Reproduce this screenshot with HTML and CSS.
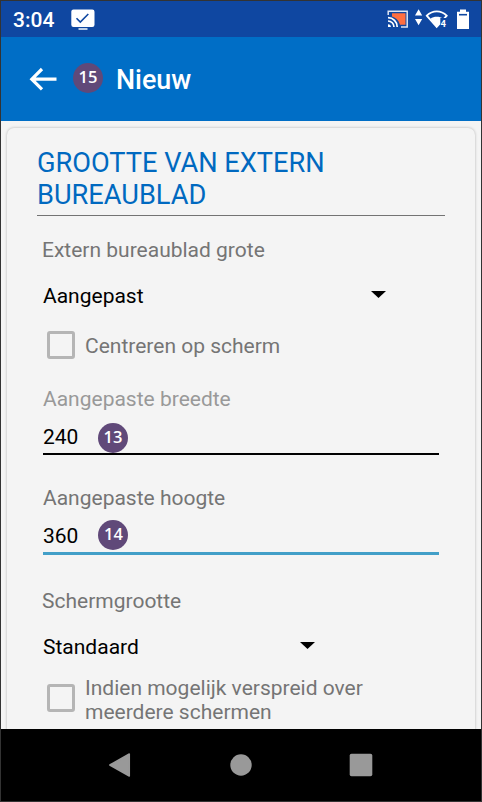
FILE: index.html
```html
<!DOCTYPE html>
<html lang="nl">
<head>
<meta charset="utf-8">
<title>Nieuw</title>
<link rel="stylesheet" href="styles.css">
</head>
<body>
<div class="phone">
  <div class="status">
    <span class="clock">3:04</span>
    <svg class="screen-icon" width="24" height="22" viewBox="0 0 24 22">
      <rect x="0.3" y="0.5" width="23.2" height="17.5" rx="2.2" fill="#fff"/>
      <path d="M5.5 9.2l3.8 3.8 8-8" fill="none" stroke="#0f47a1" stroke-width="1.6"/>
      <path d="M7.5 20h9" stroke="#dce8f5" stroke-width="1.7"/>
    </svg>
    <svg class="signals" width="84" height="22" viewBox="0 0 84 22">
      <path d="M5 5.300h13.500v11.400h-5.500C11.500 11.500 8 9.500 5 8.500z" fill="#ff6e40"/>
      <path d="M1.200 7V3.200h19v15.800H14" fill="none" stroke="#dfe6f3" stroke-width="1.500"/>
      <path d="M1 9.700a9.200 9.200 0 0 1 9.200 9.200M1 13a6 6 0 0 1 6 6" fill="none" stroke="#fff" stroke-width="1.700"/>
      <path d="M1 16.200a2.900 2.900 0 0 1 2.900 2.900H1z" fill="#fff"/>
      <path d="M31.600 1.300l3.600 6.200H28zM31.600 17.300L28 11.100h7.200z" fill="#fff"/>
      <path d="M39.800 7.700C45.500 2 54 2 59.700 7.700L49.700 19z" fill="none" stroke="#fff" stroke-width="1.800"/>
      <path d="M43.500 10.800c3.200-2.600 9.300-2.600 12.500 0L49.700 19.500z" fill="#fff"/>
      <path d="M53.300 10h8v9h-8z" fill="#0f47a1"/>
      <text x="53.400" y="18.500" class="wifi-num">4</text>
      <path d="M73 1.500h6v2.200h3V21H70V3.700h3z" fill="#fff"/>
      <path d="M72 6.700h8" stroke="#0f47a1" stroke-width="1.600"/>
    </svg>
  </div>
  <header class="appbar">
    <svg class="back" width="28" height="24" viewBox="0 0 28 24">
      <path d="M27.500 12.200H3M13 2L2.800 12.200l10.200 10.200" fill="none" stroke="#fff" stroke-width="3.200"/>
    </svg>
    <span class="badge badge-bar">15</span>
    <h1>Nieuw</h1>
  </header>
  <main>
    <section class="card">
      <h2>GROOTTE VAN EXTERN BUREAUBLAD</h2>
      <p class="label first">Extern bureaublad grote</p>
      <div class="select select-wide"><span>Aangepast</span><i class="caret"></i></div>
      <label class="check"><i class="box"></i><span>Centreren op scherm</span></label>
      <div class="field muted">
        <p>Aangepaste breedte</p>
        <div class="input"><span>240</span><span class="badge">13</span></div>
      </div>
      <div class="field focused">
        <p>Aangepaste hoogte</p>
        <div class="input"><span>360</span><span class="badge">14</span></div>
      </div>
      <p class="label second">Schermgrootte</p>
      <div class="select"><span>Standaard</span><i class="caret"></i></div>
      <label class="check multi"><i class="box"></i><span>Indien mogelijk verspreid over meerdere schermen</span></label>
    </section>
  </main>
  <nav class="navbar">
    <svg width="480" height="72" viewBox="0 0 480 72">
      <path d="M108.800 36L128.300 25v22z" fill="#999" stroke="#999" stroke-width="1.500" stroke-linejoin="round"/>
      <circle cx="240" cy="36" r="10.700" fill="#999"/>
      <rect x="348.700" y="24.700" width="22.600" height="22.600" rx="1.800" fill="#999"/>
    </svg>
  </nav>
</div>
</body>
</html>
```
FILE: styles.css
```css
* { box-sizing: border-box; margin: 0; padding: 0; }
body { width: 482px; height: 802px; overflow: hidden; font-family: Roboto, sans-serif; font-size: 21px; line-height: 24px; color: #000; }
.phone { width: 482px; height: 802px; border: 1px solid #333; display: flex; flex-direction: column; background: #f4f4f4; }
.status { height: 36px; flex: none; background: #0f47a1; display: flex; align-items: flex-start; padding: 7px 10px 0 12px; }
.clock { width: 58px; color: #fff; font-size: 21px; line-height: 24px; font-weight: 500; }
.screen-icon { margin-top: 1px; }
.signals { margin-left: auto; }
.wifi-num { font: 700 9.500px Roboto, sans-serif; fill: #fff; }
.appbar { height: 84px; flex: none; background: #006ec6; display: flex; align-items: center; padding-left: 28px; }
.appbar h1 { color: #fff; font-size: 26.900px; line-height: 32px; font-weight: 500; margin: 2px 0 0 13px; }
.badge { width: 30px; height: 30px; flex: none; border-radius: 50%; background: #604979; color: #fff; font: 600 16.500px/28px "Open Sans", sans-serif; text-align: center; }
.badge-bar { margin: -2px 0 0 16px; }
main { flex: 1; min-height: 0; overflow: hidden; padding: 7px 6px 0; }
.card { height: 640px; border-radius: 7px; background: #f4f4f4; box-shadow: 0 0 3px rgba(0, 0, 0, .28); padding: 19px 30px 0; }
h2 { width: 408px; height: 69px; border-bottom: 1px solid #737373; color: #0069c0; font-size: 27.200px; line-height: 32px; font-weight: 400; }
.label { color: #757575; padding-left: 5px; }
.first { margin-top: 22px; }
.select { width: 272px; margin: 22px 0 0 6px; display: flex; justify-content: space-between; }
.select-wide { width: 343px; }
.caret { width: 15px; height: 7px; margin-top: 7px; background: #000; clip-path: polygon(0 0, 100% 0, 50% 100%); }
.check { display: flex; align-items: center; gap: 10px; margin: 23px 0 0 10px; color: #757575; width: 350px; }
.check span { position: relative; top: 1px; }
.box { width: 28px; height: 28px; flex: none; border: 3px solid #b5b5b5; border-radius: 3px; }
.multi { margin-top: 15px; }
.multi span { top: 2px; }
.field { width: 396px; margin: 28px 0 0 6px; color: #757575; }
.muted p { color: #999; }
.input { display: flex; height: 44px; color: #000; border-bottom: 2px solid #000; padding-top: 14px; }
.input .badge { margin: -2.500px 0 0 19.500px; }
.focused { margin-top: 31px; }
.focused .input { height: 45px; border-bottom: 3px solid #429fc8; }
.focused .badge { margin-top: -4px; margin-left: 20px; }
.second { margin-top: 34px; }
.navbar { height: 72px; flex: none; background: #000; }
.navbar svg { display: block; }
```
